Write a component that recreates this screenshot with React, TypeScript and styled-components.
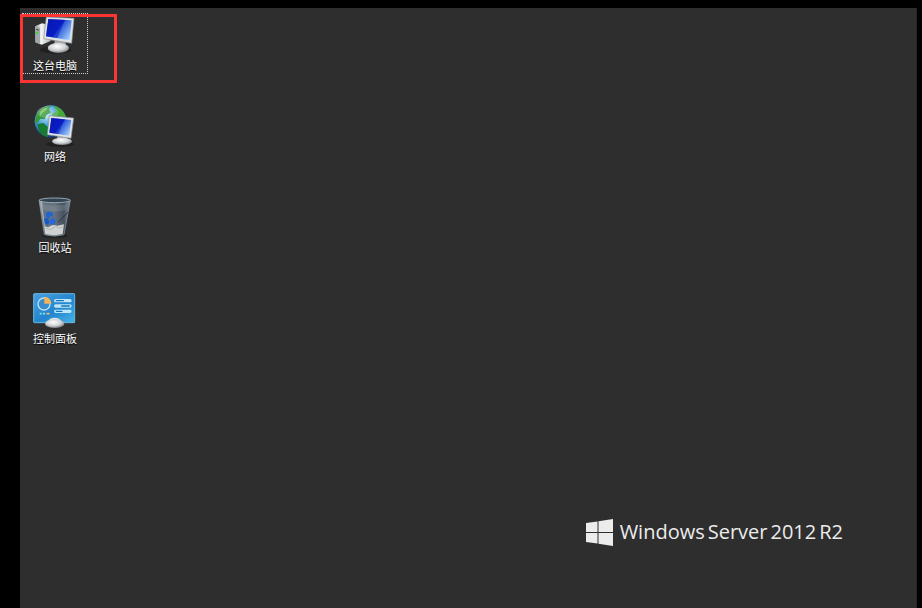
import React from "react";
import styled, { createGlobalStyle } from "styled-components";

const GlobalStyle = createGlobalStyle`
  * { box-sizing: border-box; }
  body { margin: 0; background: #000; }
`;

const Screen = styled.div`
  display: flex;
  min-height: 100vh;
  padding: 8px 5px 0 20px;
  background: #000;
`;

const Desktop = styled.main`
  flex: 1;
  display: flex;
  justify-content: space-between;
  background: #2e2e2e;
  border-right: 1px solid #272727;
`;

const IconList = styled.nav`
  display: flex;
  flex-direction: column;
  gap: 30px;
  padding: 5px 2px;
`;

const Highlighted = styled.div`
  position: relative;
`;

const HighlightFrame = styled.div`
  position: absolute;
  top: 1px;
  left: -2px;
  width: 97px;
  height: 69px;
  border: 3px solid #fc3434;
  pointer-events: none;
`;

const Shortcut = styled.button<{ $focused?: boolean }>`
  display: flex;
  flex-direction: column;
  align-items: center;
  width: 66px;
  padding: 0 0 2px;
  border: 0;
  background: transparent;
  outline: ${(p) => (p.$focused ? "1px dotted #d0d0d0" : "none")};
  outline-offset: -1px;
  color: #fff;
  font: 11px/14px "Noto Sans CJK SC", sans-serif;
  text-shadow: 0 1px 1px #000;
`;

const Glyph = styled.svg`
  display: block;
  width: 48px;
  height: 45px;
`;

const Brand = styled.footer`
  display: flex;
  align-items: center;
  align-self: flex-end;
  gap: 7px;
  margin: 0 73px 62px 0;
  color: #ececec;
`;

const Flag = styled.svg`
  display: block;
  width: 27px;
  height: 27px;
`;

const Wordmark = styled.span`
  display: flex;
  gap: 3px;
  font: 400 20px/28px "Open Sans", sans-serif;
`;

function Metal({ id }: { id: string }) {
  return (
    <>
      <linearGradient id={id + "Screen"} x1="0" y1="0.2" x2="1" y2="0.8">
        <stop offset="0" stopColor="#0618a8" />
        <stop offset="0.46" stopColor="#0a1ed0" />
        <stop offset="0.5" stopColor="#2c58d8" />
        <stop offset="1" stopColor="#a8d4ff" />
      </linearGradient>
      <radialGradient id={id + "Base"} cx="0.45" cy="0.35" r="0.65">
        <stop offset="0" stopColor="#ffffff" />
        <stop offset="0.6" stopColor="#cfd1d3" />
        <stop offset="1" stopColor="#777b7e" />
      </radialGradient>
    </>
  );
}

function ComputerIcon() {
  return (
    <Glyph viewBox="3 3 144 135" aria-hidden="true">
      <defs>
        <Metal id="pc" />
        <linearGradient id="tower" x1="0" x2="1">
          <stop offset="0" stopColor="#909496" />
          <stop offset="0.4" stopColor="#f4f5f5" />
          <stop offset="1" stopColor="#b0b4b6" />
        </linearGradient>
      </defs>
      <ellipse cx="76" cy="114" rx="48" ry="11" fill="#171717" opacity="0.6" />
      <path d="M15 43L36 34L62 40V87L35 98L16 91Z" fill="url(#tower)" />
      <path d="M15 43L30 47V97L16 91Z" fill="#a2a7aa" />
      <path d="M18 52L27 55" stroke="#3d4447" strokeWidth="3" />
      <circle cx="20" cy="63" r="3.5" fill="#23dc35" />
      <path d="M75 81L105 84L109 105H72Z" fill="#a8abad" />
      <ellipse cx="85" cy="108" rx="32" ry="15" fill="url(#pcBase)" />
      <path d="M49 15L132 19L125 94L41 80Z" fill="#dfe3e7" stroke="#8d9398" strokeWidth="2" strokeLinejoin="round" />
      <path d="M55 21L125 25L119 85L48 73Z" fill="url(#pcScreen)" />
      <path d="M55 21L105 24L82 78L48 73Z" fill="#0719bb" opacity="0.5" />
    </Glyph>
  );
}

function NetworkIcon() {
  return (
    <Glyph viewBox="7 18 144 135" aria-hidden="true">
      <defs>
        <Metal id="net" />
        <radialGradient id="ocean" cx="0.35" cy="0.3" r="0.75">
          <stop offset="0" stopColor="#c9edff" />
          <stop offset="0.45" stopColor="#409bd6" />
          <stop offset="1" stopColor="#0a3478" />
        </radialGradient>
        <clipPath id="globe"><circle cx="66" cy="70" r="48" /></clipPath>
      </defs>
      <ellipse cx="94" cy="139" rx="42" ry="8" fill="#171717" opacity="0.6" />
      <circle cx="66" cy="70" r="48" fill="url(#ocean)" />
      <g clipPath="url(#globe)">
        <path d="M26 44Q40 22 68 24L61 34L67 43L53 52L48 64L35 62L26 76L17 72Z" fill="#36983c" />
        <path d="M78 22L101 32L114 58L96 61L84 53L76 58L69 49L82 41Z" fill="#46a838" />
        <path d="M26 79L44 75L61 90L55 104L58 120L41 112L30 97Z" fill="#167c31" />
        <path d="M34 42Q43 29 57 29L53 37L43 43L35 54Z" fill="#9ad765" opacity="0.7" />
      </g>
      <ellipse cx="57" cy="43" rx="33" ry="18" fill="#fff" opacity="0.18" />
      <path d="M87 113H115L118 131H83Z" fill="#aaaeb0" />
      <ellipse cx="100" cy="130" rx="30" ry="11" fill="url(#netBase)" />
      <path d="M62 53L135 60L127 121L56 110Z" fill="#dfe3e7" stroke="#858c93" strokeWidth="2" strokeLinejoin="round" />
      <path d="M68 60L128 66L121 113L62 104Z" fill="url(#netScreen)" />
      <path d="M68 60L108 64L89 108L62 104Z" fill="#0719bb" opacity="0.5" />
    </Glyph>
  );
}

function RecycleBinIcon() {
  return (
    <Glyph viewBox="9 15 144 135" aria-hidden="true">
      <defs>
        <linearGradient id="glass" x1="0" x2="1">
          <stop offset="0" stopColor="#a7b2bb" />
          <stop offset="0.16" stopColor="#65727e" />
          <stop offset="0.5" stopColor="#65727e" />
          <stop offset="0.8" stopColor="#45525e" />
          <stop offset="1" stopColor="#8493a0" />
        </linearGradient>
      </defs>
      <ellipse cx="80" cy="137" rx="38" ry="7" fill="#171717" opacity="0.6" />
      <path d="M33 31L49 134Q79 143 108 134L127 31Z" fill="url(#glass)" stroke="#8b98a3" strokeWidth="2" />
      <path d="M49 109L60 112L75 104L89 107L108 103L104 132Q78 139 52 132Z" fill="#cfd2d1" />
      <path d="M54 115L67 119L82 109L96 115L106 109" fill="none" stroke="#b0b5b5" strokeWidth="3" />
      <path d="M121 66L91 96" stroke="#26333e" strokeWidth="3" />
      <path d="M54 68L64 64L74 70L76 80L67 77L64 87L53 80Z" fill="#2165d2" />
      <path d="M48 86L59 84L64 95L60 105L49 99Z" fill="#1859c4" />
      <path d="M65 91L78 82L83 96L76 106L65 102Z" fill="#2867d8" />
      <ellipse cx="80" cy="31" rx="47" ry="7" fill="#334552" stroke="#98a8b3" strokeWidth="3" />
      <path d="M39 34L53 130" stroke="#d3dde3" strokeWidth="3" opacity="0.55" />
      <path d="M44 43Q83 52 118 42L115 60Q80 68 47 61Z" fill="#b7c4cf" opacity="0.18" />
    </Glyph>
  );
}

function ControlPanelIcon() {
  return (
    <Glyph viewBox="9 6 144 135" aria-hidden="true">
      <defs>
        <Metal id="panel" />
        <linearGradient id="board" x1="0" y1="0" x2="1" y2="1">
          <stop offset="0" stopColor="#4a9fe1" />
          <stop offset="0.55" stopColor="#2384ce" />
          <stop offset="1" stopColor="#46b5e6" />
        </linearGradient>
      </defs>
      <rect x="17" y="29" width="123" height="87" rx="2" fill="url(#board)" stroke="#65b8e4" strokeWidth="3" />
      <circle cx="48" cy="60" r="18" fill="#398dcd" stroke="#b7e2f8" strokeWidth="4" />
      <path d="M49 59V38A21 21 0 0 1 70 59Z" fill="#f5b45b" />
      <g strokeLinecap="round">
        <path d="M83 50H126M83 66H126M83 82H126" stroke="#bde6fa" strokeWidth="10" />
        <path d="M85 50H106M101 66H124M85 82H102" stroke="#1377b8" strokeWidth="4" />
      </g>
      <path d="M35 89H41M45 89H51" stroke="#7fe2f4" strokeWidth="5" />
      <path d="M55 89H65" stroke="#e7bd72" strokeWidth="5" />
      <path d="M66 104Q80 98 94 104L101 115H59Z" fill="#dfe2e4" />
      <ellipse cx="80" cy="119" rx="29" ry="13" fill="url(#panelBase)" />
    </Glyph>
  );
}

export default function App() {
  return (
    <>
      <GlobalStyle />
      <Screen>
        <Desktop>
          <IconList aria-label="桌面">
            <Highlighted>
              <Shortcut type="button" $focused><ComputerIcon />这台电脑</Shortcut>
              <HighlightFrame />
            </Highlighted>
            <Shortcut type="button"><NetworkIcon />网络</Shortcut>
            <Shortcut type="button"><RecycleBinIcon />回收站</Shortcut>
            <Shortcut type="button"><ControlPanelIcon />控制面板</Shortcut>
          </IconList>
          <Brand>
            <Flag viewBox="0 0 27 27" fill="currentColor" aria-hidden="true">
              <path d="M0 4L11.5 2.5V13H0ZM12.5 2.3L27 0V13H12.5ZM0 14H11.5V24.5L0 23ZM12.5 14H27V27L12.5 24.7Z" />
            </Flag>
            <Wordmark><span>Windows</span><span>Server</span><span>2012</span><span>R2</span></Wordmark>
          </Brand>
        </Desktop>
      </Screen>
    </>
  );
}
